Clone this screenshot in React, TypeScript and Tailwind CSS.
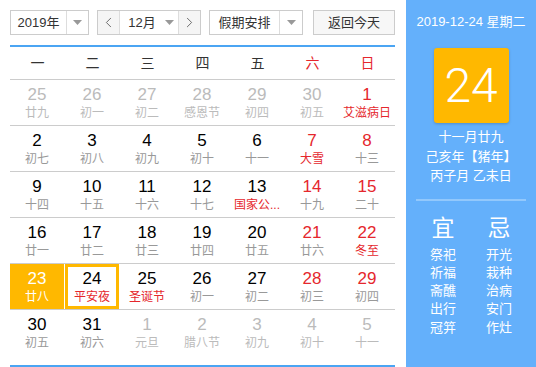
import React from 'react';
import { ChevronLeft, ChevronRight } from 'lucide-react';

type Day = { d: number; l: string; other?: boolean; red?: boolean; fest?: boolean };

const WEEK = ['一', '二', '三', '四', '五', '六', '日'];

const ROWS: Day[][] = [
  [
    { d: 25, l: '廿九', other: true },
    { d: 26, l: '初一', other: true },
    { d: 27, l: '初二', other: true },
    { d: 28, l: '感恩节', other: true },
    { d: 29, l: '初四', other: true },
    { d: 30, l: '初五', other: true },
    { d: 1, l: '艾滋病日', red: true, fest: true },
  ],
  [
    { d: 2, l: '初七' },
    { d: 3, l: '初八' },
    { d: 4, l: '初九' },
    { d: 5, l: '初十' },
    { d: 6, l: '十一' },
    { d: 7, l: '大雪', red: true, fest: true },
    { d: 8, l: '十三', red: true },
  ],
  [
    { d: 9, l: '十四' },
    { d: 10, l: '十五' },
    { d: 11, l: '十六' },
    { d: 12, l: '十七' },
    { d: 13, l: '国家公...', fest: true },
    { d: 14, l: '十九', red: true },
    { d: 15, l: '二十', red: true },
  ],
  [
    { d: 16, l: '廿一' },
    { d: 17, l: '廿二' },
    { d: 18, l: '廿三' },
    { d: 19, l: '廿四' },
    { d: 20, l: '廿五' },
    { d: 21, l: '廿六', red: true },
    { d: 22, l: '冬至', red: true, fest: true },
  ],
  [
    { d: 23, l: '廿八' },
    { d: 24, l: '平安夜', fest: true },
    { d: 25, l: '圣诞节', fest: true },
    { d: 26, l: '初一' },
    { d: 27, l: '初二' },
    { d: 28, l: '初三', red: true },
    { d: 29, l: '初四', red: true },
  ],
  [
    { d: 30, l: '初五' },
    { d: 31, l: '初六' },
    { d: 1, l: '元旦', other: true },
    { d: 2, l: '腊八节', other: true },
    { d: 3, l: '初九', other: true },
    { d: 4, l: '初十', other: true },
    { d: 5, l: '十一', other: true },
  ],
];

const YI = ['祭祀', '祈福', '斋醮', '出行', '冠笄'];
const JI = ['开光', '栽种', '治病', '安门', '作灶'];

function Caret() {
  return (
    <svg width="9" height="5" viewBox="0 0 9 5" className="text-[#999]">
      <path d="M0 0h9L4.5 5z" fill="currentColor" />
    </svg>
  );
}

function Cell({ day }: { day: Day }) {
  const today = !day.other && day.d === 23;
  const picked = !day.other && day.d === 24;
  let num = 'text-black';
  let lun = 'text-[#999]';
  if (day.other) {
    num = 'text-[#bbb]';
    lun = 'text-[#bbb]';
  } else if (day.red) {
    num = 'text-[#e5272d]';
  }
  if (day.fest && !day.other) lun = 'text-[#e5272d]';
  if (today) {
    num = 'text-white';
    lun = 'text-white';
  }
  return (
    <div className="h-[45px] pr-[1px]">
      <div
        className={
          'h-full flex flex-col items-center ' +
          (today ? 'bg-[#ffb800] pt-[5px]' : picked ? 'border-[3px] border-[#ffb800] pt-[2px]' : 'pt-[5px]')
        }
      >
        <span className={'text-[17px] leading-[20px] ' + num}>{day.d}</span>
        <span className={'text-[12px] leading-[16px] whitespace-nowrap ' + lun}>{day.l}</span>
      </div>
    </div>
  );
}

export default function App() {
  return (
    <div
      className="w-[536px] h-[367px] flex bg-white text-[#333] overflow-hidden"
      style={{ fontFamily: '"Liberation Sans", Arial, "Noto Sans CJK SC", sans-serif' }}
    >
      <div className="w-[406px] h-full pl-[10px] pr-[11px] pt-[10px] flex flex-col">
        <div className="flex items-center h-[25px] text-[13px]">
          <div className="w-[79px] h-[25px] border border-[#ccc] flex">
            <div className="w-[55px] flex items-center justify-center">2019年</div>
            <div className="flex-1 border-l border-[#ddd] flex items-center justify-center">
              <Caret />
            </div>
          </div>
          <div className="ml-[8px] w-[104px] h-[25px] border border-[#ccc] flex">
            <div className="w-[21px] bg-[#f5f5f5] flex items-center justify-center text-[#555]">
              <ChevronLeft size={17} strokeWidth={1.2} />
            </div>
            <div className="flex-1 border-x border-[#ddd] flex items-center justify-center gap-[9px] pl-[4px]">
              <span>12月</span>
              <Caret />
            </div>
            <div className="w-[21px] bg-[#f5f5f5] flex items-center justify-center text-[#555]">
              <ChevronRight size={17} strokeWidth={1.2} />
            </div>
          </div>
          <div className="ml-[8px] w-[94px] h-[25px] border border-[#ccc] flex">
            <div className="w-[69px] flex items-center justify-center">假期安排</div>
            <div className="flex-1 border-l border-[#ddd] flex items-center justify-center">
              <Caret />
            </div>
          </div>
          <div className="ml-[10px] w-[82px] h-[25px] border border-[#ccc] bg-[#f7f7f7] flex items-center justify-center">
            返回今天
          </div>
        </div>

        <div className="mt-[10px] h-[2px] bg-[#4ba5f3]" />

        <div className="grid grid-cols-7 h-[33px] border-b border-[#ccc] text-[14px]">
          {WEEK.map((w, i) => (
            <div key={w} className={'flex items-center justify-center ' + (i >= 5 ? 'text-[#e5272d]' : 'text-[#333]')}>
              {w}
            </div>
          ))}
        </div>

        {ROWS.map((row, r) => (
          <div key={r} className={'grid grid-cols-7 ' + (r < 5 ? 'border-b border-[#ccc]' : '')}>
            {row.map((day, i) => (
              <Cell key={i} day={day} />
            ))}
          </div>
        ))}

        <div className="mt-auto h-[2px] bg-[#4ba5f3]" />
      </div>

      <div className="flex-1 h-full bg-[#64b0fb] text-white flex flex-col items-center">
        <div className="mt-[14px] text-[13px] leading-[16px]">2019-12-24 星期二</div>
        <div className="mt-[18px] w-[75px] h-[75px] rounded-[3px] bg-[#ffb800] shadow-[0_1px_3px_rgba(0,0,0,0.2)] flex items-center justify-center">
          <span className="text-[48px] leading-none font-light" style={{ fontFamily: 'Roboto, "Liberation Sans", sans-serif' }}>
            24
          </span>
        </div>
        <div className="mt-[4px] text-[13px] leading-[19.5px] text-center">
          <div>十一月廿九</div>
          <div>己亥年【猪年】</div>
          <div>丙子月 乙未日</div>
        </div>
        <div className="mt-[13px] w-[110px] h-[2px] bg-white/30" />
        <div className="mt-[14px] flex">
          <div className="w-[56px] flex flex-col items-center">
            <span className="text-[23px] leading-[26px]">宜</span>
            <div className="mt-[5px] text-[13px] leading-[18.3px] text-center">
              {YI.map((t) => (
                <div key={t}>{t}</div>
              ))}
            </div>
          </div>
          <div className="w-[56px] flex flex-col items-center">
            <span className="text-[23px] leading-[26px]">忌</span>
            <div className="mt-[5px] text-[13px] leading-[18.3px] text-center">
              {JI.map((t) => (
                <div key={t}>{t}</div>
              ))}
            </div>
          </div>
        </div>
      </div>
    </div>
  );
}
